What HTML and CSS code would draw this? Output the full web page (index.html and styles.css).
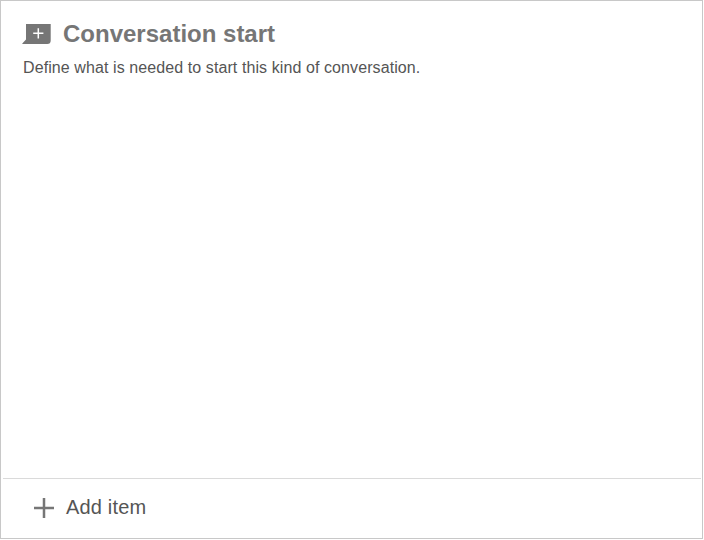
FILE: index.html
```html
<!DOCTYPE html>
<html lang="en">
<head>
<meta charset="utf-8">
<title>Conversation start</title>
<link rel="stylesheet" href="styles.css">
</head>
<body>
<section class="panel">
  <header class="header">
    <div class="title-row">
      <svg class="bubble" width="29" height="20" viewBox="0 0 29 20"><path class="bubble-shape" d="M4 0H28.700V16.500Q28.700 20 25.200 20H0.300V19.500L4 15.500Z"/><path class="bubble-plus" d="M16.300 4.200V14.400M11.200 9.300H21.400"/></svg>
      <h1 class="title">Conversation start</h1>
    </div>
    <p class="description">Define what is needed to start this kind of conversation.</p>
  </header>
  <button class="add-item" type="button">
    <svg class="plus" width="20" height="20" viewBox="0 0 20 20"><path d="M10 0V20M0 10H20"/></svg>
    <span class="add-label">Add item</span>
  </button>
</section>
</body>
</html>
```

FILE: styles.css
```css
* { box-sizing: border-box; }
body { margin: 0; background: #fff; font-family: "Liberation Sans", Arial, sans-serif; }
.panel { display: flex; flex-direction: column; width: 703px; height: 539px; border: 1px solid #c8c8c8; box-shadow: 0 1px 0 #e6e6e6; }
.header { flex: 1; padding: 18px 22px; }
.title-row { display: flex; align-items: center; gap: 12px; height: 30px; margin-left: -1px; }
.bubble-shape { fill: #767676; }
.bubble-plus { fill: none; stroke: #fff; stroke-width: 1.5; }
.title { margin: 0; font-size: 24px; line-height: 30px; font-weight: 700; color: #767676; white-space: nowrap; }
.description { margin: 9px 0 0; font-size: 16px; line-height: 20px; letter-spacing: 0.09px; color: #555; white-space: nowrap; }
.add-item { display: flex; align-items: center; gap: 12px; height: 60px; margin: 0 1px 0 2px; padding: 0 31px 2px; border: 0; border-top: 1px solid #dadada; background: #fff; font: inherit; }
.plus { fill: none; stroke: #767676; stroke-width: 2.5; }
.add-label { margin-top: -2px; font-size: 20px; line-height: 24px; letter-spacing: 0.17px; color: #555; }
```
